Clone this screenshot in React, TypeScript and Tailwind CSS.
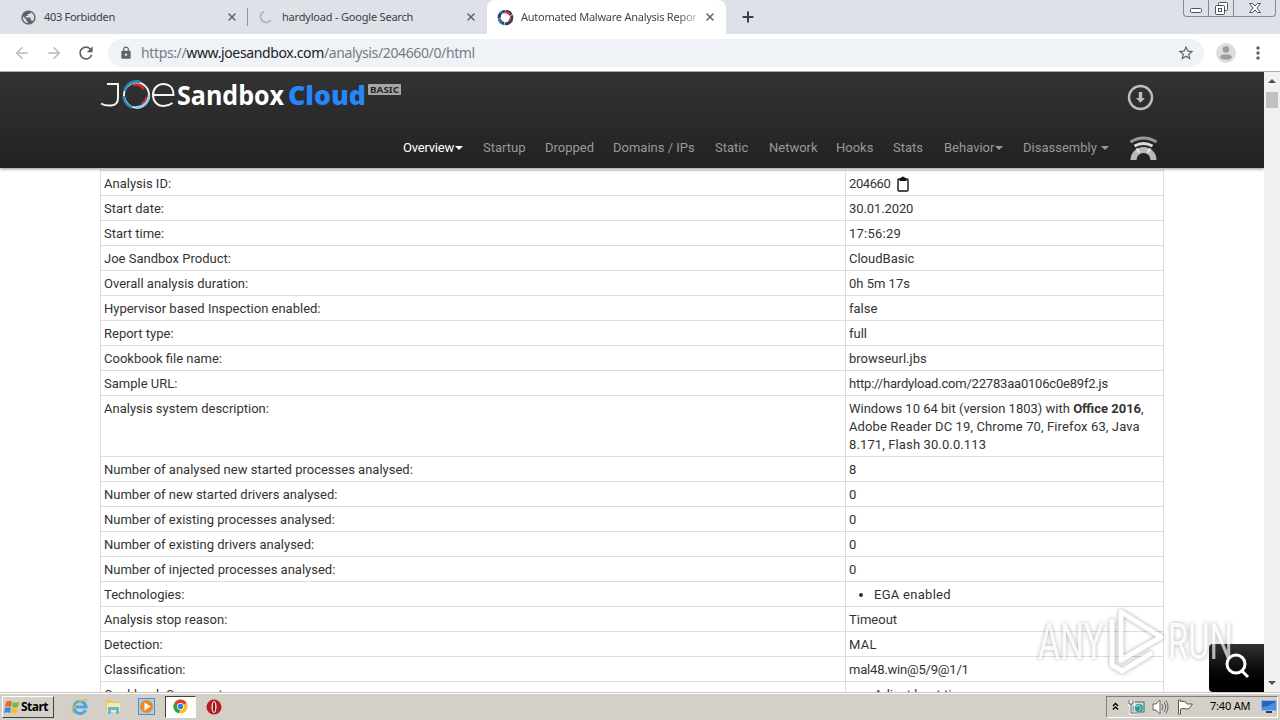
import React from 'react';
import { X, Plus, ArrowLeft, ArrowRight } from 'lucide-react';
import { MdLock, MdRefresh, MdStarBorder, MdMoreVert, MdPublic } from 'react-icons/md';

const navItems = [
    { label: 'Overview', width: 'w-[60px]', active: true, caret: true },
    { label: 'Startup', width: 'w-[42px]' },
    { label: 'Dropped', width: 'w-[48px]' },
    { label: 'Domains / IPs', width: 'w-[82px]' },
    { label: 'Static', width: 'w-[34px]' },
    { label: 'Network', width: 'w-[47px]' },
    { label: 'Hooks', width: 'w-[37px]' },
    { label: 'Stats', width: 'w-[31px]' },
    { label: 'Behavior', width: 'w-[59px]', caret: true },
    { label: 'Disassembly', width: 'w-[86px]', caret: true },
];

const rows: { label: string; value: React.ReactNode; bullet?: boolean; valueClass?: string }[] = [
    { label: 'Analysis ID:', value: <span className="flex items-center gap-[7px]">204660 <ClipboardIcon /></span>, valueClass: 'tracking-[-0.4px]' },
    { label: 'Start date:', value: '30.01.2020', valueClass: 'tracking-[-0.1px]' },
    { label: 'Start time:', value: '17:56:29', valueClass: 'tracking-[0.25px]' },
    { label: 'Joe Sandbox Product:', value: 'CloudBasic' },
    { label: 'Overall analysis duration:', value: '0h 5m 17s' },
    { label: 'Hypervisor based Inspection enabled:', value: 'false' },
    { label: 'Report type:', value: 'full' },
    { label: 'Cookbook file name:', value: 'browseurl.jbs' },
    { label: 'Sample URL:', value: 'http://hardyload.com/22783aa0106c0e89f2.js', valueClass: 'tracking-[-0.2px]' },
    {
        label: 'Analysis system description:',
        value: (
            <>
                Windows 10 64 bit (version 1803) with <b>Office 2016</b>,<br />
                <span className="tracking-[0.12px]">Adobe Reader DC 19, Chrome 70, Firefox 63, Java</span><br />
                <span className="tracking-[0.12px]">8.171, Flash 30.0.0.113</span>
            </>
        ),
    },
    { label: 'Number of analysed new started processes analysed:', value: '8' },
    { label: 'Number of new started drivers analysed:', value: '0' },
    { label: 'Number of existing processes analysed:', value: '0' },
    { label: 'Number of existing drivers analysed:', value: '0' },
    { label: 'Number of injected processes analysed:', value: '0' },
    { label: 'Technologies:', value: 'EGA enabled', bullet: true, valueClass: 'tracking-[0.28px]' },
    { label: 'Analysis stop reason:', value: 'Timeout' },
    { label: 'Detection:', value: 'MAL', valueClass: 'tracking-[0.28px]' },
    { label: 'Classification:', value: 'mal48.win@5/9@1/1', valueClass: 'tracking-[-0.2px]' },
    { label: 'Cookbook Comments:', value: 'Adjust boot time', bullet: true },
];

function ClipboardIcon() {
    return (
        <svg width="12" height="16" viewBox="0 0 12 16">
            <rect x="1" y="3" width="10" height="12" rx="1" fill="none" stroke="#111" strokeWidth="1.4" />
            <path d="M2.5 5V3.200L5 .8h2l2.500 2.400V5z" fill="#111" />
        </svg>
    );
}

function JoeIcon({ size }: { size: number }) {
    return (
        <svg width={size} height={size} viewBox="0 0 16 16" fill="none">
            <circle cx="8" cy="8" r="6" stroke="#244264" strokeWidth="2.8" strokeDasharray="10 .7 6 .7" />
            <path d="M7 3.3a5 5 0 0 1 5.5 3M12.7 8.5a5 5 0 0 1-1.8 3.4" stroke="#e0313c" strokeWidth="1.8" />
            <path d="M2 9a6 6 0 0 0 3 4.6M3 4.4l1.8-2" stroke="#3179b4" strokeWidth="2" />
        </svg>
    );
}

function TabStrip() {
    return (
        <div className="flex h-[34px] shrink-0 bg-[#dee1e8] text-[11px] tracking-[-0.2px] text-[#3c4043]">
            <div className="flex w-[247px] items-center pl-5">
                <MdPublic size={17} className="text-[#5f6368]" />
                <span className="ml-[7px] w-[182px] tracking-[-0.3px]">403 Forbidden</span>
                <X size={12} strokeWidth={3} className="text-[#5f6368]" />
            </div>
            <div className="my-2 w-px bg-[#8e9299]"></div>
            <div className="flex w-[239px] items-center pl-[11px]">
                <svg width="14" height="14" viewBox="0 0 14 14" fill="none">
                    <path d="M5 1.5a5.7 5.7 0 1 0 7 8.3" stroke="#b5b7bb" strokeWidth="2" />
                </svg>
                <span className="ml-[9px] w-[183px]">hardyload - Google Search</span>
                <X size={12} strokeWidth={3} className="text-[#5f6368]" />
            </div>
            <div className="flex w-[239px] items-center rounded-t-lg bg-white pl-[10px]">
                <JoeIcon size={17} />
                <span className="ml-[7px] w-[175px] overflow-hidden whitespace-nowrap bg-gradient-to-r from-[#3c4043] from-90% to-[#c4c6c8] bg-clip-text text-transparent tracking-[-0.25px]">Automated Malware Analysis Report</span>
                <X size={12} strokeWidth={3} className="ml-2 text-[#5f6368]" />
            </div>
            <div className="flex flex-1 items-center pl-[14px]">
                <Plus size={16} strokeWidth={3} className="text-[#3c4043]" />
            </div>
            <div className="mr-1 flex h-[17px] w-[93px] rounded-b border border-t-0 border-[#858a96] text-[#4d535e]">
                <div className="flex w-[25px] items-center justify-center border-r border-[#858a96]">
                    <svg width="12" height="17" viewBox="0 0 12 17" fill="none" stroke="currentColor"><rect x=".5" y="8.5" width="11" height="4" rx="1" fill="#fff" /></svg>
                </div>
                <div className="flex w-[25px] items-center justify-center border-r border-[#858a96]">
                    <svg width="13" height="14" viewBox="0 0 13 14" fill="#fff" stroke="currentColor"><rect x="3.5" y="1.5" width="9" height="8" rx="1" /><rect x=".5" y="4.5" width="9" height="9" rx="1" /><rect x="3.5" y="7.5" width="3" height="3" /></svg>
                </div>
                <div className="flex flex-1 items-center justify-center">
                    <svg width="12" height="12" viewBox="0 0 12 12" fill="#fff" stroke="currentColor"><path d="M.5 1.5h3.2L6 4l2.3-2.5h3.2L7.9 6l3.6 4.5H8.3L6 8l-2.3 2.5H.5L4.1 6z" /></svg>
                </div>
            </div>
        </div>
    );
}

function Toolbar() {
    return (
        <div className="flex h-[38px] shrink-0 items-center border-b border-[#a9acae] bg-white text-[#5f6368]">
            <ArrowLeft size={18} className="ml-[13px] text-[#b8babd]" />
            <ArrowRight size={18} className="ml-[14px] text-[#b8babd]" />
            <MdRefresh size={20} className="ml-[13px] stroke-current" />
            <div className="ml-[12px] flex h-[28px] w-[1096px] items-center rounded-full bg-[#eff2f6] pl-[11px]">
                <MdLock size={14} />
                <span className="ml-[8px] flex-1 whitespace-nowrap text-[14px] tracking-[-0.37px] text-[#777c82]">
                    https://<span className="text-[#202124]">www.joesandbox.com</span>/analysis/204660/0/html
                </span>
                <MdStarBorder size={18} className="mr-[9px]" />
            </div>
            <div className="ml-3 h-5 w-5 overflow-hidden rounded-full bg-[#dcdddf]">
                <svg width="20" height="20" viewBox="0 0 20 20" fill="#9b9da0"><circle cx="10" cy="6.5" r="3.3" /><ellipse cx="10" cy="14" rx="6" ry="2.8" /></svg>
            </div>
            <MdMoreVert size={20} className="ml-[12px]" />
        </div>
    );
}

function Logo() {
    return (
        <svg width="304" height="36" viewBox="0 0 304 36" fill="none">
            <path d="M7 6h11v14q0 7-7 7.500Q5 28 1 25.500" stroke="#f2f2f2" strokeWidth="2" />
            <circle cx="36.500" cy="17" r="12.500" stroke="#f2f2f2" strokeWidth="2" />
            <path d="M24.500 13a12.500 12.500 0 0 1 16-9M23.500 18a13.500 13.500 0 0 0 9 11.500" stroke="#278bc4" strokeWidth="2.6" />
            <path d="M33 7a10.500 10.500 0 0 1 11 4M46.500 19a10 10 0 0 1-5 7" stroke="#df2528" strokeWidth="2.4" />
            <path d="M49 17a12.500 12.500 0 0 1-13 12.500" stroke="#8bcdf0" strokeWidth="2.8" />
            <path d="M53 17h20.500C73.500 9.500 69 6 63.500 6 57 6 53 11 53 17s4 11 10.500 11q5 0 9-3" stroke="#f2f2f2" strokeWidth="2" />
            <text x="77" y="27" textLength="107" lengthAdjust="spacingAndGlyphs" fill="#fff" fontFamily="Open Sans, Noto Sans, sans-serif" fontWeight="700" fontSize="26">Sandbox</text>
            <text x="188" y="27" textLength="78" lengthAdjust="spacingAndGlyphs" fill="#2686fb" fontFamily="Open Sans, Noto Sans, sans-serif" fontWeight="800" fontSize="26">Cloud</text>
            <rect x="268" y="6" width="33" height="11" rx="1" fill="#a6a6a6" />
            <text x="270" y="15" textLength="29" lengthAdjust="spacingAndGlyphs" fill="#262626" fontFamily="Noto Sans, sans-serif" fontWeight="700" fontSize="9.5">BASIC</text>
        </svg>
    );
}

function Header() {
    return (
        <div className="z-10 flex h-24 shrink-0 flex-col bg-gradient-to-b from-[#333] to-[#222] shadow-[0_1px_3px_rgba(0,0,0,0.45)]">
            <div className="ml-[100px] flex h-[60px] w-[1064px] justify-between">
                <div className="pt-[6px]"><Logo /></div>
                <svg className="mr-[10px] mt-3" width="27" height="27" viewBox="0 0 27 27" fill="none">
                    <circle cx="13.500" cy="13.500" r="11.5" stroke="#bdbdbd" strokeWidth="2.4" />
                    <path d="M11.800 8h3.400v6h2.800l-4.500 4.800L9 14h2.800z" fill="#bdbdbd" />
                </svg>
            </div>
            <div className="ml-[403px] flex h-8 items-center gap-5 whitespace-nowrap text-[13px] text-[#999]">
                {navItems.map((item) => (
                    <div key={item.label} className={`flex items-center justify-between ${item.width} ${item.active ? 'tracking-[-0.2px] text-white' : ''}`}>
                        <span>{item.label}</span>
                        {item.caret && <span className="h-0 w-0 border-x-4 border-t-4 border-x-transparent border-t-current"></span>}
                    </div>
                ))}
                <svg className="-ml-px" width="31" height="28" viewBox="0 0 31 28" fill="none">
                    <path d="M2.500 8Q15.500 0 28.500 8" stroke="#999" strokeWidth="3" />
                    <path d="M6.500 12Q15.500 7 24.500 12" stroke="#ddd" strokeWidth="3" />
                    <path d="M5.500 26a10 10 0 0 1 20 0" stroke="#b9b9b9" strokeWidth="6" />
                    <path d="m8.500 14.500 3 4M22.500 14.500l-3 4" stroke="#eee" strokeWidth="2" />
                </svg>
            </div>
        </div>
    );
}

function ReportTable() {
    return (
        <div className="ml-[100px] mt-[2px] w-[1064px] border border-[#ddd] text-[13px] leading-[18px] text-[#333]">
            {rows.map((row) => (
                <div key={row.label} className="flex border-b border-[#ddd]">
                    <div className="w-[745px] border-r border-[#ddd] px-[3px] pb-[2px] pt-[4px]">{row.label}</div>
                    <div className={`flex-1 whitespace-nowrap px-[3px] pb-[2px] pt-[4px] ${row.valueClass ?? ''}`}>
                        {row.bullet ? <ul className="ml-[25px] list-disc"><li>{row.value}</li></ul> : row.value}
                    </div>
                </div>
            ))}
        </div>
    );
}

function ScrollBar() {
    return (
        <div className="flex w-4 shrink-0 flex-col items-center justify-between bg-[#f1f1f1] pb-[7px] pt-[7px]">
            <div className="flex flex-col items-center gap-[9px]">
                <div className="h-0 w-0 border-x-4 border-b-4 border-x-transparent border-b-[#505050]"></div>
                <div className="h-4 w-3 bg-[#c1c1c1]"></div>
            </div>
            <div className="h-0 w-0 border-x-4 border-t-4 border-x-transparent border-t-[#505050]"></div>
        </div>
    );
}

function Watermark() {
    return (
        <svg className="absolute bottom-[43px] right-[39px] z-30 opacity-75 drop-shadow-[0_0_2px_rgba(0,0,0,0.45)]" width="204" height="70" viewBox="0 0 204 70" fill="none">
            <g fill="#fff" fillOpacity=".9" fontFamily="Roboto, sans-serif" fontSize="50">
                <text x="1" y="52" textLength="66" lengthAdjust="spacingAndGlyphs">ANY</text>
                <text x="131" y="52" textLength="65" lengthAdjust="spacingAndGlyphs">RUN</text>
            </g>
            <path d="M84 5 124 30 84 53zM75 12v46l10 6 30-18" stroke="#fff" strokeWidth="5" strokeLinejoin="round" />
        </svg>
    );
}

function Taskbar() {
    return (
        <div className="z-20 flex h-7 shrink-0 items-center border-t border-[#c9c6bf] bg-[#d4d0c8] text-[11px] text-black shadow-[inset_0_1px_0_#fff]">
            <div className="ml-[2px] flex h-[22px] w-[52px] items-center gap-px border border-b-[#404040] border-l-white border-r-[#404040] border-t-white pl-px text-[12px] font-bold tracking-[-0.5px]">
                <svg width="16" height="16" viewBox="0 0 16 16">
                    <path d="M2 3q3-2 6-.5L7 8Q4 6.500 1 8z" fill="#e9682d" />
                    <path d="M9 3q3 1.500 6 0l-1 5q-3 1.500-6 0z" fill="#7ab843" />
                    <path d="M1 9q3-1.500 6 0l-1 5q-3-1.500-6 0z" fill="#3b8bdd" />
                    <path d="M8 9q3 1.500 6 0l-1 5q-3 1.500-6 0z" fill="#f4bd36" />
                </svg>
                Start
            </div>
            <svg className="ml-[17px]" width="18" height="18" viewBox="0 0 18 18" fill="none">
                <path d="M14.500 12a6 6 0 1 1 .5-3H5" stroke="#42a7e5" strokeWidth="3" />
                <path d="M1.500 15.500C-1 10 13-2 16.500 2.500" stroke="#e7b93d" strokeWidth="1.500" />
            </svg>
            <svg className="ml-4" width="17" height="17" viewBox="0 0 17 17">
                <path d="M1 2h5l1 2h8v9H1z" fill="#eac75f" />
                <path d="M2 5h13v9H2z" fill="#fae9a3" />
                <path d="M3 16V9h11v7h-3v-4H6v4z" fill="#62b8e2" />
            </svg>
            <svg className="ml-4" width="17" height="17" viewBox="0 0 17 17">
                <rect x=".5" y=".5" width="16" height="16" fill="#a2d2f5" stroke="#538cc5" />
                <circle cx="8.500" cy="8.500" r="6.500" fill="#f18816" />
                <path d="m6.500 4.500 6 4-6 4z" fill="#fff" />
            </svg>
            <div className="ml-[10px] flex h-[22px] w-[31px] items-center justify-center border border-b-white border-l-[#404040] border-r-white border-t-[#404040] bg-white">
                <svg width="15" height="15" viewBox="0 0 16 16">
                    <circle cx="8" cy="8" r="7.500" fill="#fbc116" />
                    <path d="M8 8 1.500 4.300A7.500 7.500 0 0 1 14.500 4.300z" fill="#e33b2e" />
                    <path d="M1.500 4.300 8 8l1 .5-3 6.800A7.500 7.500 0 0 1 1.500 4.300" fill="#2c9f4b" />
                    <circle cx="8" cy="8" r="3.700" fill="#fff" />
                    <circle cx="8" cy="8" r="2.900" fill="#3f7de0" />
                </svg>
            </div>
            <svg className="ml-[10px]" width="16" height="16" viewBox="0 0 16 16">
                <circle cx="8" cy="8" r="7.500" fill="#b91c1c" />
                <ellipse cx="8" cy="8" rx="2.500" ry="6" fill="#eee" />
                <ellipse cx="8" cy="8" rx="1.200" ry="5" fill="#961313" />
            </svg>
            <div className="ml-auto mr-[2px] flex h-[22px] w-[172px] items-center border border-b-white border-l-[#808080] border-r-white border-t-[#808080]">
                <svg className="ml-[5px]" width="7" height="9" viewBox="0 0 8 9" fill="none" stroke="#000" strokeWidth="1.500"><path d="m1 4 3-3 3 3M1 8l3-3 3 3" /></svg>
                <svg className="ml-[9px]" width="17" height="16" viewBox="0 0 17 16" fill="none">
                    <rect x="5" y="3" width="11" height="10" fill="#d5e5e6" stroke="#43656e" />
                    <path d="M1 1v4h4V1M3 5v9h7" stroke="#fff" strokeWidth="3" />
                    <path d="M1 1v4h4V1M3 5v9h7" stroke="#555" />
                    <circle cx="11" cy="9" r="4" fill="#299993" />
                    <path d="m8 8 3-2 2 3-2 3" stroke="#a5e3db" />
                </svg>
                <svg className="ml-[7px]" width="17" height="16" viewBox="0 0 17 16" fill="#fff" stroke="#666">
                    <path d="M1 5h3l4-4v14l-4-4H1z" />
                    <path d="M10 5q2 3 0 6M12 3q3.500 5 0 10M14 1.500q4 6.500 0 13" fill="none" />
                </svg>
                <svg className="ml-2" width="17" height="16" viewBox="0 0 17 16" fill="#fff" stroke="#555"><path d="M1.500 1v14h2v-5q4-1 6 0h2l4-5H10Q9 1.500 3.500 2.500V1z" /></svg>
                <span className="ml-4 w-[42px] whitespace-nowrap tracking-[-0.2px]">7:40 AM</span>
                <svg className="ml-[9px]" width="16" height="15" viewBox="0 0 16 15">
                    <rect x=".5" y="1.500" width="15" height="10" fill="#2862be" stroke="#8fb9e9" />
                    <path d="M1 8Q8 8 15 2v9H1z" fill="#4a90df" />
                    <path d="M5 12h6v2H5z" fill="#303f5b" />
                </svg>
            </div>
        </div>
    );
}

export default function App() {
    return (
        <div className="relative flex h-[720px] w-[1280px] flex-col overflow-hidden bg-white font-['Noto_Sans',sans-serif]">
            <TabStrip />
            <Toolbar />
            <div className="flex min-h-0 flex-1">
                <div className="relative flex min-w-0 flex-1 flex-col overflow-hidden font-[Roboto,sans-serif]">
                    <Header />
                    <ReportTable />
                    <button className="absolute bottom-0 right-0 flex h-12 w-[55px] items-center justify-center rounded-l bg-gradient-to-b from-[#333] to-black pb-1">
                        <svg width="28" height="28" viewBox="0 0 28 28" fill="none" stroke="#fff" strokeWidth="3"><circle cx="13" cy="12" r="9" /><path d="m19 19 6 6" /></svg>
                    </button>
                </div>
                <ScrollBar />
            </div>
            <Taskbar />
            <Watermark />
        </div>
    );
}
